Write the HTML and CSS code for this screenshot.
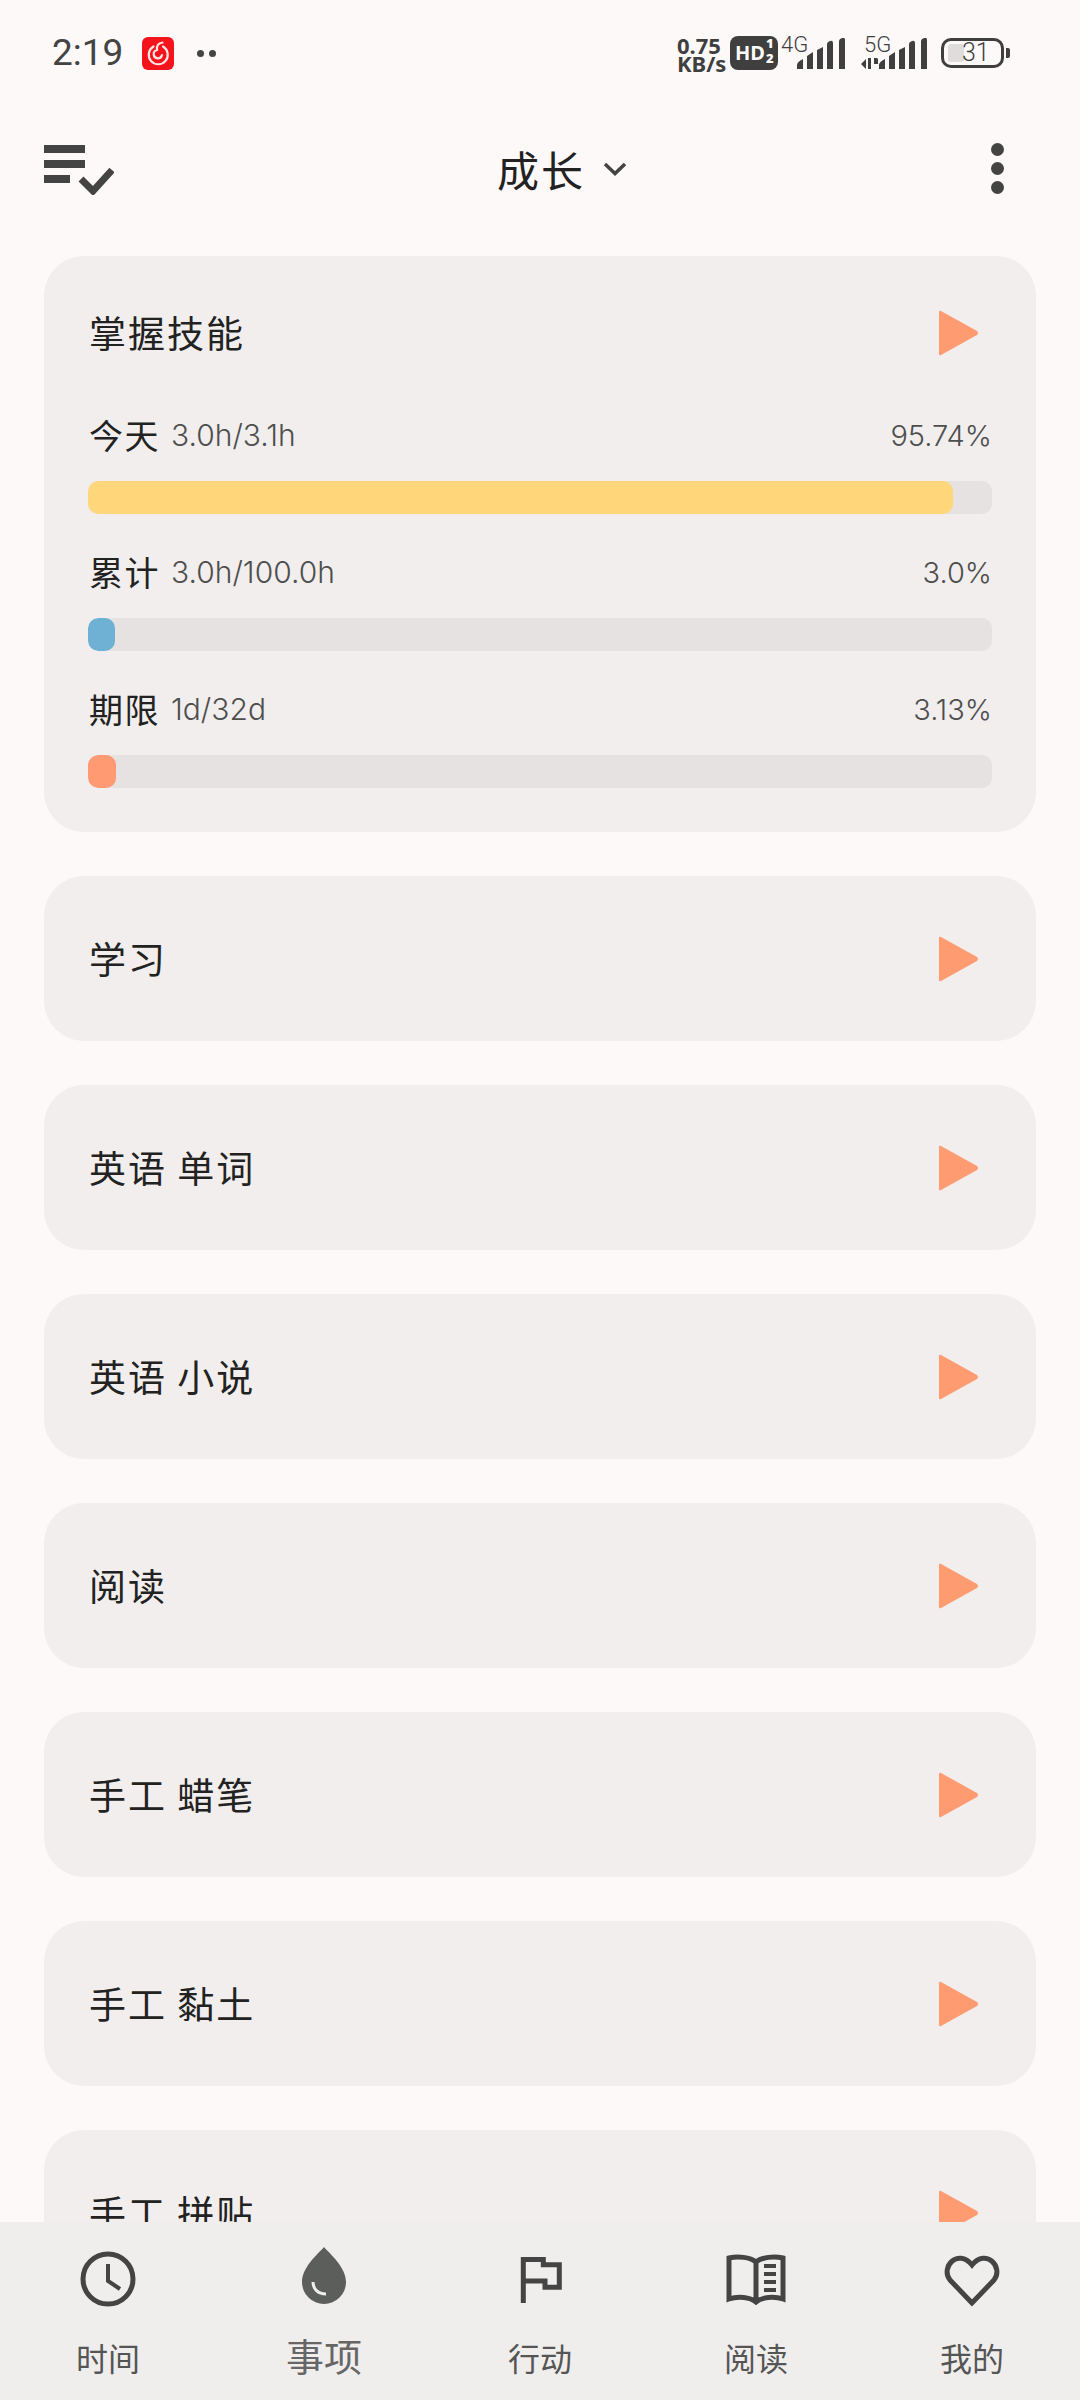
FILE: index.html
```html
<!DOCTYPE html>
<html lang="zh-CN">

<head>
    <meta charset="UTF-8">
    <meta name="viewport" content="width=device-width, initial-scale=1.0">
    <title>成长</title>
    <link rel="stylesheet" href="styles.css">
</head>

<body>
    <div class="status-bar">
        <span class="clock">2:19</span>
        <svg class="app-icon" width="32" height="33" viewBox="0 0 32 33">
            <rect width="32" height="33" rx="6" fill="#f5141c" />
            <path d="M11.500 9.500a9.500 9.500 0 1 0 9.500 0M20 18a4.200 4.200 0 1 1-5-5c-.5-4 1-7 5.500-7.500"
                fill="none" stroke="#ffe6e2" stroke-width="2.200" stroke-linecap="round" />
        </svg>
        <span class="status-dots"><i></i><i></i></span>
        <div class="status-right">
            <div class="speed"><span>0.75</span><span>KB/s</span></div>
            <div class="hd">HD<span class="hd-frac"><b>1</b><b>2</b></span></div>
            <div class="net">
                <span class="net-label">4G</span>
                <svg width="50" height="32" viewBox="0 0 50 32" fill="#3f3f3f">
                    <path d="M0 31v-4q0-3 6-6v10zM10 31V18l6-4v17zM20 31V12l6-3v22zM30 31V6q0-2 3-3t3 2v26zM42 31V3q0-2 3-3t3 2v29z" />
                </svg>
            </div>
            <div class="net net-five">
                <span class="net-label">5G</span>
                <svg width="66" height="32" viewBox="0 0 66 32" fill="#3f3f3f">
                    <path d="M0 26l5-5v10zM7 20h3v11H7zM13 20h3l1 1v5h-4z" />
                    <path d="M18 31v-4q0-3 6-6v10zM28 31V18l6-4v17zM38 31V12l6-3v22zM48 31V6q0-2 3-3t3 2v26zM60 31V3q0-2 3-3t3 2v29z" />
                </svg>
            </div>
            <div class="battery">
                <div class="battery-body"><span class="battery-level"></span><span class="battery-text">31</span></div>
                <span class="battery-nub"></span>
            </div>
        </div>
    </div>

    <header class="top-bar">
        <svg class="list-icon" width="70" height="50" viewBox="0 0 70 50" fill="#444">
            <rect x="0" y="0" width="41" height="8" />
            <rect x="0" y="15" width="41" height="8" />
            <rect x="0" y="30" width="26" height="8" />
            <path d="M37 34l12 12 19-21" fill="none" stroke="#444" stroke-width="7" />
        </svg>
        <div class="page-title">
            <span>成长</span>
            <svg width="24" height="14" viewBox="0 0 24 14">
                <path d="M2 2l10 9.500L22 2" fill="none" stroke="#444" stroke-width="3.500" />
            </svg>
        </div>
        <div class="more"><i></i><i></i><i></i></div>
    </header>

    <main class="list">
        <section class="card card-open">
            <div class="card-head">
                <span class="card-name">掌握技能</span>
                <svg class="play" width="42" height="50" viewBox="0 0 42 50"><path d="M3 3L39 23Q41 25 39 27L3 47Q1 48 1 46V4Q1 2 3 3Z" /></svg>
            </div>
            <div class="stat">
                <div class="stat-line"><span class="stat-name">今天</span><span class="stat-value">3.0h/3.1h</span><span class="stat-percent">95.74%</span></div>
                <div class="track"><div class="fill fill-yellow" style="width: 95.74%"></div></div>
            </div>
            <div class="stat">
                <div class="stat-line"><span class="stat-name">累计</span><span class="stat-value">3.0h/100.0h</span><span class="stat-percent">3.0%</span></div>
                <div class="track"><div class="fill fill-blue" style="width: 3%"></div></div>
            </div>
            <div class="stat">
                <div class="stat-line"><span class="stat-name">期限</span><span class="stat-value">1d/32d</span><span class="stat-percent">3.13%</span></div>
                <div class="track"><div class="fill fill-orange" style="width: 3.13%"></div></div>
            </div>
        </section>

        <section class="card"><div class="card-head"><span class="card-name">学习</span><svg class="play" width="42" height="50" viewBox="0 0 42 50"><path d="M3 3L39 23Q41 25 39 27L3 47Q1 48 1 46V4Q1 2 3 3Z" /></svg></div></section>
        <section class="card"><div class="card-head"><span class="card-name">英语 单词</span><svg class="play" width="42" height="50" viewBox="0 0 42 50"><path d="M3 3L39 23Q41 25 39 27L3 47Q1 48 1 46V4Q1 2 3 3Z" /></svg></div></section>
        <section class="card"><div class="card-head"><span class="card-name">英语 小说</span><svg class="play" width="42" height="50" viewBox="0 0 42 50"><path d="M3 3L39 23Q41 25 39 27L3 47Q1 48 1 46V4Q1 2 3 3Z" /></svg></div></section>
        <section class="card"><div class="card-head"><span class="card-name">阅读</span><svg class="play" width="42" height="50" viewBox="0 0 42 50"><path d="M3 3L39 23Q41 25 39 27L3 47Q1 48 1 46V4Q1 2 3 3Z" /></svg></div></section>
        <section class="card"><div class="card-head"><span class="card-name">手工 蜡笔</span><svg class="play" width="42" height="50" viewBox="0 0 42 50"><path d="M3 3L39 23Q41 25 39 27L3 47Q1 48 1 46V4Q1 2 3 3Z" /></svg></div></section>
        <section class="card"><div class="card-head"><span class="card-name">手工 黏土</span><svg class="play" width="42" height="50" viewBox="0 0 42 50"><path d="M3 3L39 23Q41 25 39 27L3 47Q1 48 1 46V4Q1 2 3 3Z" /></svg></div></section>
        <section class="card"><div class="card-head"><span class="card-name">手工 拼贴</span><svg class="play" width="42" height="50" viewBox="0 0 42 50"><path d="M3 3L39 23Q41 25 39 27L3 47Q1 48 1 46V4Q1 2 3 3Z" /></svg></div></section>
    </main>

    <nav class="tabs">
        <a class="tab">
            <svg width="60" height="60" viewBox="0 0 60 60" fill="none" stroke="#444" stroke-width="5">
                <circle cx="30" cy="30" r="25" />
                <path d="M30 15v17l12 8" stroke-width="4" />
            </svg>
            <span>时间</span>
        </a>
        <a class="tab tab-active">
            <svg width="60" height="60" viewBox="0 0 60 60">
                <path d="M30 1C24 8 8 21 8 36a22 22 0 0 0 44 0C52 21 36 8 30 1Z" fill="#5c5e5c" />
                <path d="M19 36c0 7 5 12 13 12" fill="none" stroke="#f0eeed" stroke-width="3" />
            </svg>
            <span>事项</span>
        </a>
        <a class="tab">
            <svg width="60" height="60" viewBox="0 0 60 60" fill="none" stroke="#444" stroke-width="5">
                <path d="M13.300 54V10.500h20v5.200h16v22.600H35V32H13.300" />
            </svg>
            <span>行动</span>
        </a>
        <a class="tab">
            <svg width="60" height="60" viewBox="0 0 60 60" fill="none" stroke="#444" stroke-width="5">
                <path d="M30 13C24 8 12 7 3 9v41c9-3 21-2 27 3 6-5 18-6 27-3V9c-9-2-21-1-27 4ZM30 13v40" />
                <path d="M38 17h12M38 25h12M38 33h12M38 41h12" stroke-width="4" />
            </svg>
            <span>阅读</span>
        </a>
        <a class="tab">
            <svg width="60" height="60" viewBox="0 0 60 60" fill="none" stroke="#444" stroke-width="5">
                <path d="M30 54L8 31C-2 18 16-1 30 16 44-1 62 18 52 31Z" />
            </svg>
            <span>我的</span>
        </a>
    </nav>
</body>

</html>
```
FILE: styles.css
```css
* {
    box-sizing: border-box;
}

html,
body {
    margin: 0;
    padding: 0;
}

body {
    width: 1080px;
    height: 2400px;
    overflow: hidden;
    display: flex;
    flex-direction: column;
    background-color: #fcf9f8;
    color: #222;
    font-family: "Noto Sans CJK SC", "Noto Sans", sans-serif;
}

/* status bar */
.status-bar {
    height: 92px;
    flex-shrink: 0;
    padding: 36px 70px 0 52px;
    display: flex;
    align-items: flex-start;
}

.clock {
    font-family: Roboto, sans-serif;
    font-weight: 400;
    font-size: 37px;
    line-height: 33px;
    color: #444;
    width: 90px;
}

.app-icon {
    margin-top: 1px;
}

.status-dots {
    display: flex;
    gap: 5px;
    margin: 14px 0 0 23px;
}

.status-dots i {
    width: 7px;
    height: 7px;
    border-radius: 50%;
    background-color: #444;
}

.status-right {
    margin-left: auto;
    display: flex;
    align-items: flex-start;
    color: #3f3f3f;
}

.speed {
    display: flex;
    flex-direction: column;
    font-family: "Noto Sans", sans-serif;
    font-weight: 700;
    font-size: 22px;
    line-height: 18px;
    width: 53px;
}

.hd {
    width: 48px;
    height: 34px;
    border-radius: 8px;
    background-color: #3f3f3f;
    color: #fcf9f8;
    font-family: "Noto Sans", sans-serif;
    font-weight: 700;
    font-size: 20px;
    line-height: 34px;
    padding-left: 5px;
    display: flex;
}

.hd-frac {
    display: flex;
    flex-direction: column;
    margin-left: 1px;
}

.hd-frac b {
    font-size: 13px;
    line-height: 15px;
}

.net {
    position: relative;
    width: 66px;
    height: 34px;
    margin-left: 3px;
    padding-top: 2px;
    padding-left: 16px;
}

.net-five {
    width: 66px;
    margin-left: 14px;
    padding-left: 0;
}

.net-label {
    position: absolute;
    top: -2px;
    left: 0;
    font-family: Roboto, sans-serif;
    font-size: 22px;
    font-weight: 300;
    line-height: 22px;
}

.net-five .net-label {
    left: 3px;
}

.battery {
    display: flex;
    align-items: center;
    margin-left: 14px;
    margin-top: 2px;
}

.battery-body {
    position: relative;
    width: 63px;
    height: 30px;
    border: 3px solid #3f3f3f;
    border-radius: 10px;
    padding: 3px 4px;
}

.battery-level {
    display: block;
    width: 16px;
    height: 100%;
    background-color: #dedddc;
    border-radius: 3px;
}

.battery-text {
    position: absolute;
    left: 18px;
    top: -2px;
    font-family: Roboto, sans-serif;
    font-weight: 300;
    font-size: 25px;
    line-height: 28px;
}

.battery-nub {
    width: 4px;
    height: 10px;
    margin-left: 2px;
    background-color: #3f3f3f;
    border-radius: 0 2px 2px 0;
}

/* top bar */
.top-bar {
    height: 152px;
    flex-shrink: 0;
    padding: 0 0 0 44px;
    display: flex;
    align-items: center;
    position: relative;
}

.list-icon {
    margin-top: 4px;
}

.page-title {
    display: flex;
    align-items: center;
    gap: 18px;
    margin-left: 383px;
    font-size: 42px;
    letter-spacing: 2px;
    color: #222;
}

.page-title svg {
    margin-top: 2px;
}

.more {
    display: flex;
    flex-direction: column;
    gap: 6px;
    margin-left: auto;
    margin-right: 76px;
}

.more i {
    width: 13px;
    height: 13px;
    border-radius: 50%;
    background-color: #444;
}

/* task cards */
.list {
    flex: 1;
    min-height: 0;
    overflow: hidden;
    padding: 12px 44px 0;
    display: flex;
    flex-direction: column;
    gap: 44px;
}

.card {
    flex-shrink: 0;
    background-color: #f1eeed;
    border-radius: 40px;
    padding: 0 44px 0 45px;
}

.card-head {
    height: 165px;
    display: flex;
    align-items: center;
    justify-content: space-between;
}

.card-open {
    padding-bottom: 44px;
}

.card-open .card-head {
    height: 153px;
}

.card-name {
    font-size: 37px;
    letter-spacing: 2px;
    white-space: pre;
    margin-top: -2px;
}

.play {
    fill: #ff9b71;
    margin-right: 12px;
}

.stat {
    margin-bottom: 32px;
}

.stat:last-child {
    margin-bottom: 0;
}

.stat-line {
    display: flex;
    align-items: center;
    height: 50px;
    margin-bottom: 22px;
}

.stat-name {
    font-size: 34px;
    letter-spacing: 1.500px;
}

.stat-value {
    font-family: Inter, sans-serif;
    font-weight: 300;
    font-size: 30px;
    color: #4e4e4e;
    margin-left: 11px;
    margin-top: 2px;
}

.stat-percent {
    font-family: Inter, sans-serif;
    font-weight: 300;
    font-size: 29px;
    color: #4e4e4e;
    margin-left: auto;
    margin-top: 2px;
}

.track {
    height: 33px;
    margin-left: -1px;
    background-color: #e5e2e1;
    border-radius: 10px;
    overflow: hidden;
}

.fill {
    height: 100%;
    border-radius: 10px;
}

.fill-yellow {
    background-color: #ffd67a;
}

.fill-blue {
    background-color: #6fb1d5;
}

.fill-orange {
    background-color: #ff9a73;
}

/* bottom tabs */
.tabs {
    height: 178px;
    flex-shrink: 0;
    background-color: #f0eeed;
    display: flex;
}

.tab {
    width: 216px;
    display: flex;
    flex-direction: column;
    align-items: center;
    padding-top: 27px;
    color: #555;
    font-size: 32px;
}

.tab span {
    margin-top: 26px;
    line-height: 44px;
}

.tab-active {
    padding-top: 24px;
    font-size: 38px;
    color: #666;
}

.tab-active span {
    margin-top: 24px;
    line-height: 50px;
}
```
